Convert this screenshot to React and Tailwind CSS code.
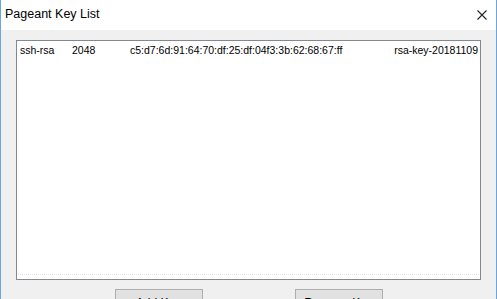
export default function App() {
  const ui = { fontFamily: '"Liberation Sans", Arial, sans-serif' };
  return (
    <div className="w-[497px] h-[299px] overflow-hidden flex flex-col border-x border-[#6aa6de] bg-[#f0f0f0]" style={ui}>
      <div className="h-[30px] shrink-0 bg-white flex items-center justify-between pl-[4px] pr-[9px]">
        <span className="text-[12.5px] text-black leading-none pb-[1px]">Pageant Key List</span>
        <svg width="10" height="10" viewBox="0 0 10 10" className="mt-[-1px]">
          <path d="M0.5 0.5 L9.5 9.5 M9.5 0.5 L0.5 9.5" stroke="#222" strokeWidth="1.1" fill="none" />
        </svg>
      </div>
      <div className="flex-1 flex flex-col pt-[10px] pl-[15px] pr-[15px]">
        <div className="h-[240px] shrink-0 border border-[#828790] bg-white flex flex-col">
          <div className="flex items-center pl-[3px] pr-[2px] pt-[3px] text-[10.5px] leading-[13px] text-black">
            <span className="w-[52px]">ssh-rsa</span>
            <span className="w-[58px]">2048</span>
            <span className="flex-1">c5:d7:6d:91:64:70:df:25:df:04f3:3b:62:68:67:ff</span>
            <span>rsa-key-20181109</span>
          </div>
          <div className="flex-1" />
          <div className="border-b border-dotted border-[#e2e2e2] mx-[1px]" />
          <div className="h-[4px]" />
        </div>
        <div className="flex justify-center gap-[92px] pt-[9px]">
          <button className="w-[88px] h-[23px] border border-[#adadad] bg-[#e1e1e1] text-[12px] text-black leading-none pt-[7px] flex justify-center items-start">Add Key</button>
          <button className="w-[88px] h-[23px] border border-[#adadad] bg-[#e1e1e1] text-[12px] text-black leading-none pt-[7px] flex justify-center items-start">Remove Key</button>
        </div>
      </div>
    </div>
  );
}
